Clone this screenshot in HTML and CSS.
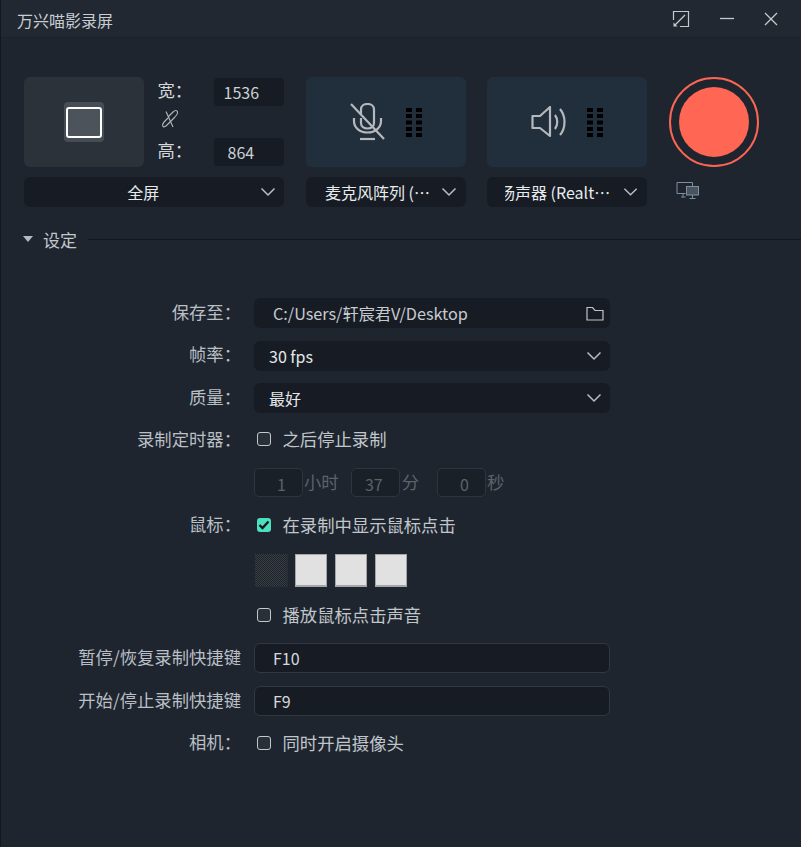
FILE: index.html
```html
<!DOCTYPE html>
<html lang="zh-CN">
<head>
<meta charset="utf-8">
<title>万兴喵影录屏</title>
<link rel="stylesheet" href="styles.css">
</head>
<body>
<div class="app">
  <header class="titlebar">
    <span class="title">万兴喵影录屏</span>
    <div class="winbtns">
      <svg width="18" height="18" viewBox="0 0 18 18" fill="none" stroke="#c6cacd" stroke-width="1.2"><path d="M1.5 10V1.5H16.5V16.5H8"/><path d="M13 5L3 15"/><path d="M1.5 12.5V16.5H5.5Z" fill="#c6cacd" stroke="none"/></svg>
      <svg width="16" height="3" viewBox="0 0 16 3" fill="none" stroke="#c6cacd" stroke-width="1.3"><path d="M1 1.5H15"/></svg>
      <svg width="14" height="14" viewBox="0 0 14 14" fill="none" stroke="#c6cacd" stroke-width="1.3"><path d="M1 1L13 13M13 1L1 13"/></svg>
    </div>
  </header>

  <section class="top">
    <div class="group capture">
      <div class="capture-body">
        <div class="tile tile-screen">
          <div class="screen-back"><div class="screen-front"></div></div>
        </div>
        <div class="dims">
          <div class="dim"><span class="dim-label">宽：</span><span class="dim-input">1536</span></div>
          <svg class="link" width="18" height="20" viewBox="0 0 18 20" fill="none" stroke="#b4b9bd" stroke-width="1.1"><path d="M5 2.500L12 18"/><path d="M7 8L12 3C14 1 16 1 16.500 3C17 5 15 7 13 9L6 16C4 18 2.500 18.500 1.800 17C1 15.500 2.500 13.500 4.500 11.500L7 9"/></svg>
          <div class="dim"><span class="dim-label">高：</span><span class="dim-input dim-center">864</span></div>
        </div>
      </div>
      <div class="select select-center"><span class="select-text">全屏</span><svg class="chev" width="16" height="10" viewBox="0 0 16 10" fill="none" stroke="#b9bec3" stroke-width="1.5"><path d="M1.5 1.5L8 8L14.5 1.5"/></svg></div>
    </div>

    <div class="group device mic">
      <div class="tile tile-device">
        <svg width="36" height="38" viewBox="0 0 36 38" fill="none" stroke="#b5b9bc" stroke-width="2.2"><path d="M11 11V6.500C11 3 14 1 17.500 1C21 1 24 3 24 6.500V20C24 23.500 21 25.500 17.500 25.500C14 25.500 11 23.500 11 20V15"/><path d="M4 15V18C4 25 10 29.500 17.500 29.500C25 29.500 31 25 31 18V15"/><path d="M10 36H25"/><path d="M1 1L34 36"/></svg>
        <svg class="level" width="16" height="29" viewBox="0 0 16 29" fill="#000"><path d="M0 0h6v4H0zM10 0h6v4H10zM0 6h6v4H0zM10 6h6v4H10zM0 12.500h6v4H0zM10 12.500h6v4H10zM0 19h6v4H0zM10 19h6v4H10zM0 25h6v4H0zM10 25h6v4H10z"/></svg>
      </div>
      <div class="select"><span class="select-text select-mic">麦克风阵列 (…</span><svg class="chev" width="16" height="10" viewBox="0 0 16 10" fill="none" stroke="#b9bec3" stroke-width="1.5"><path d="M1.500 1.500L8 8L14.500 1.500"/></svg></div>
    </div>

    <div class="group device speaker">
      <div class="tile tile-device">
        <svg width="36" height="34" viewBox="0 0 36 34" fill="none" stroke="#b5b9bc" stroke-width="2.2" stroke-linejoin="round"><path d="M1.500 11H9L19 2V31L9 23H1.500Z"/><path d="M24 10C27 14 27 20 24 24"/><path d="M29 4C35 11 35 23 29 30"/></svg>
        <svg class="level" width="16" height="29" viewBox="0 0 16 29" fill="#000"><path d="M0 0h6v4H0zM10 0h6v4H10zM0 6h6v4H0zM10 6h6v4H10zM0 12.500h6v4H0zM10 12.500h6v4H10zM0 19h6v4H0zM10 19h6v4H10zM0 25h6v4H0zM10 25h6v4H10z"/></svg>
      </div>
      <div class="select"><span class="select-text select-speaker"><span class="clip">扬声器 (Realt…</span></span><svg class="chev" width="16" height="10" viewBox="0 0 16 10" fill="none" stroke="#b9bec3" stroke-width="1.5"><path d="M1.500 1.500L8 8L14.500 1.500"/></svg></div>
    </div>

    <div class="group rec">
      <div class="rec-ring"><div class="rec-dot"></div></div>
      <svg class="monitors" width="24" height="18" viewBox="0 0 24 18" fill="none" stroke="#7c8f9f" stroke-width="1"><path d="M9.500 11.500H1V.5H16.500V4"/><path d="M5 15H9.500M7 11.500V15"/><rect x="10.500" y="4.500" width="12" height="8.500" fill="#7c8f9f" fill-opacity=".45"/><path d="M13.500 16.500H19.500M16.500 13V16.500"/></svg>
    </div>
  </section>

  <div class="section-head">
    <span class="tri"></span>
    <span class="section-title">设定</span>
    <span class="section-line"></span>
  </div>

  <section class="form">
    <div class="row r-save">
      <label class="lbl">保存至：</label>
      <div class="field field-path"><span>C:/Users/轩宸君V/Desktop</span><svg width="18" height="15" viewBox="0 0 18 15" fill="none" stroke="#bfc3c6" stroke-width="1.200"><path d="M1 14V1.500H6.500L9 4.500H17V14Z"/></svg></div>
    </div>
    <div class="row r-sel">
      <label class="lbl">帧率：</label>
      <div class="field"><span>30 fps</span><svg width="16" height="10" viewBox="0 0 16 10" fill="none" stroke="#b9bec3" stroke-width="1.500"><path d="M1.500 1.500L8 8L14.500 1.500"/></svg></div>
    </div>
    <div class="row r-sel">
      <label class="lbl">质量：</label>
      <div class="field"><span>最好</span><svg width="16" height="10" viewBox="0 0 16 10" fill="none" stroke="#b9bec3" stroke-width="1.500"><path d="M1.500 1.500L8 8L14.500 1.500"/></svg></div>
    </div>
    <div class="row r-check">
      <label class="lbl">录制定时器：</label>
      <div class="check"><span class="box"></span><span class="check-text">之后停止录制</span></div>
    </div>
    <div class="row r-timer">
      <div></div>
      <div class="timer">
        <span class="t-input">1</span><span class="t-unit unit-h">小时</span>
        <span class="t-input">37</span><span class="t-unit unit-m">分</span>
        <span class="t-input">0</span><span class="t-unit">秒</span>
      </div>
    </div>
    <div class="row r-mouse">
      <label class="lbl">鼠标：</label>
      <div class="check"><span class="box box-on"><svg width="12" height="10" viewBox="0 0 12 10" fill="none" stroke="#12181e" stroke-width="2.400"><path d="M1.500 5L4.500 8L10.500 1.500"/></svg></span><span class="check-text">在录制中显示鼠标点击</span></div>
    </div>
    <div class="row r-swatch">
      <div></div>
      <div class="swatches"><span class="swatch swatch-dark"></span><span class="swatch"></span><span class="swatch"></span><span class="swatch"></span></div>
    </div>
    <div class="row r-sound">
      <div></div>
      <div class="check"><span class="box"></span><span class="check-text">播放鼠标点击声音</span></div>
    </div>
    <div class="row r-key">
      <label class="lbl">暂停/恢复录制快捷键</label>
      <div class="field field-key"><span>F10</span></div>
    </div>
    <div class="row r-key">
      <label class="lbl">开始/停止录制快捷键</label>
      <div class="field field-key"><span>F9</span></div>
    </div>
    <div class="row r-camera">
      <label class="lbl">相机：</label>
      <div class="check"><span class="box"></span><span class="check-text">同时开启摄像头</span></div>
    </div>
  </section>
</div>
</body>
</html>
```
FILE: styles.css
```css
* { box-sizing: border-box; }
html, body { margin: 0; padding: 0; }
body {
  background: #1e252e;
  font-family: "Noto Sans CJK SC", "Noto Sans", sans-serif;
  font-size: 16px;
  color: #e4e7ea;
}
.app {
  width: 801px;
  height: 847px;
  overflow: hidden;
  background: #1e252e;
  border-left: 1px solid #14181e;
}

.titlebar {
  height: 38px;
  display: flex;
  align-items: center;
  justify-content: space-between;
  padding: 0 23px 0 16px;
  background: #212832;
  border-bottom: 1px solid #1b2129;
}
.title { color: #c9cdd1; line-height: 1; margin-top: 2px; }
.winbtns { display: flex; align-items: center; gap: 29px; }

.top { display: flex; padding: 39px 0 0 23px; }
.group { display: flex; flex-direction: column; gap: 10px; }
.capture { width: 259.5px; }
.capture-body { display: flex; height: 90px; }
.device { width: 160px; }
.mic { margin-left: 22.5px; }
.speaker { margin-left: 21px; }
.rec { width: 90px; margin-left: 22px; gap: 15px; }

.tile {
  height: 90px;
  border-radius: 6px;
  display: flex;
  align-items: center;
  justify-content: center;
}
.tile-screen { width: 119.5px; background: #2b323a; }
.tile-device { background: #212e3b; gap: 20px; }
.screen-back {
  width: 40px;
  height: 40px;
  background: #474d55;
  border-radius: 4px;
  display: flex;
  align-items: center;
  justify-content: center;
}
.screen-front {
  width: 36px;
  height: 31px;
  border: 2.5px solid #fff;
  border-radius: 3px;
  background: #4c535b;
}

.dims {
  flex: 1;
  display: flex;
  flex-direction: column;
  align-items: flex-start;
  padding: 1px 0 0 14px;
}
.dim { display: flex; align-items: center; width: 126px; height: 28px; }
.dim-label { width: 56px; font-size: 17.33px; color: #d5d9dc; line-height: 1; margin-top: -4px; }
.dim-input {
  width: 70px;
  height: 28px;
  line-height: 28px;
  padding-left: 10px;
  background: #171c24;
  border-radius: 4px;
  color: #ccd1d6;
}
.dim-center { padding-left: 14px; }
.link { margin: 3px 0 4px 3px; display: block; }
.dims .dim:last-child { margin-top: 5px; }

.select {
  height: 30px;
  background: #171c24;
  border-radius: 6px;
  display: flex;
  align-items: center;
  justify-content: space-between;
  padding: 0 9px 0 0;
  position: relative;
}
.select-text { color: #e8ebee; line-height: 1; white-space: nowrap; }
.select-center { justify-content: center; }
.select-center .select-text { margin-right: 12px; }
.select-center .chev { position: absolute; right: 8px; top: 10px; }
.select-mic { margin-left: 19px; }
.select-speaker { margin-left: 18px; width: 125px; overflow: hidden; display: block; line-height: 24px; }
.clip { display: block; margin-left: -6px; }

.rec-ring {
  width: 90px;
  height: 90px;
  border-radius: 50%;
  border: 2.5px solid #fb6553;
  display: flex;
  align-items: center;
  justify-content: center;
}
.rec-dot {
  width: 70px;
  height: 70px;
  border-radius: 50%;
  background: #ff6653;
}
.monitors { margin-left: 7px; display: block; }

.section-head {
  display: flex;
  align-items: center;
  height: 24px;
  margin-top: 20px;
  padding-left: 22px;
}
.tri {
  width: 0;
  height: 0;
  border-left: 5px solid transparent;
  border-right: 5px solid transparent;
  border-top: 6px solid #b6babe;
}
.section-title { margin-left: 10px; font-size: 17px; color: #c3c8cc; line-height: 1; }
.section-line { flex: 1; height: 1px; background: #12171d; margin-left: 11px; }

.form { padding-top: 47px; }
.row {
  display: grid;
  grid-template-columns: 240px 356px;
  column-gap: 13px;
  align-items: center;
}
.lbl { text-align: right; font-size: 17.33px; color: #b9bfc5; line-height: 1; margin-top: -3px; white-space: nowrap; }
.r-check .lbl { margin-top: -1px; }
.r-save { height: 30px; }
.r-sel { height: 30px; margin-top: 12.5px; }
.r-check { height: 28px; margin-top: 12px; }
.r-timer { height: 30px; margin-top: 14px; }
.r-mouse { height: 28px; margin-top: 14px; }
.r-swatch { height: 33px; margin-top: 15px; }
.r-sound { height: 28px; margin-top: 14px; }
.r-key { height: 30px; margin-top: 14px; }
.r-key + .r-key { margin-top: 13px; }
.r-camera { height: 28px; margin-top: 13px; }

.field {
  height: 30px;
  background: #171c24;
  border-radius: 6px;
  display: flex;
  align-items: center;
  justify-content: space-between;
  padding: 0 8px 0 15px;
  color: #e4e7ea;
}
.field-path { padding-left: 19px; padding-right: 6px; color: #c6cbd0; font-size: 16.2px; }
.field-key {
  border: 1px solid #303841;
  padding-left: 18px;
  color: #d4d8dc;
}

.check { display: flex; align-items: center; padding-left: 2.5px; }
.box {
  width: 14px;
  height: 14px;
  border: 1.5px solid #c3c7ca;
  border-radius: 3px;
  background: #2a3038;
  display: flex;
  align-items: center;
  justify-content: center;
}
.box-on { border: 0; background: #4ce0c0; }
.check-text { margin-left: 12px; font-size: 17.33px; color: #c0c6cc; line-height: 1; }

.timer { display: flex; align-items: center; color: #5b6269; }
.t-input {
  width: 49px;
  height: 29px;
  line-height: 30px;
  padding-right: 16px;
  text-align: right;
  background: #1a2028;
  border: 1px solid #2e353e;
  border-radius: 5px;
}
.t-unit { margin-left: 1px; font-size: 17.33px; line-height: 1; }
.unit-h { margin-right: 12px; }
.unit-m { margin-right: 18px; margin-left: 2px; }

.swatches { display: flex; gap: 8px; padding-left: 1px; }
.swatch {
  width: 32px;
  height: 33px;
  background: #e1e1e1;
  border: 1px solid #a4a6a8;
  border-bottom-width: 2px;
}
.swatch-dark {
  width: 33px;
  margin-right: -1px;
  border: 0;
  border-right: 2px solid #272e37;
  border-bottom: 1px solid #272e37;
  background-color: #2c3238;
  background-image: repeating-conic-gradient(#1e2329 0 25%, #383e44 0 50%);
  background-size: 2px 2px;
}
```
